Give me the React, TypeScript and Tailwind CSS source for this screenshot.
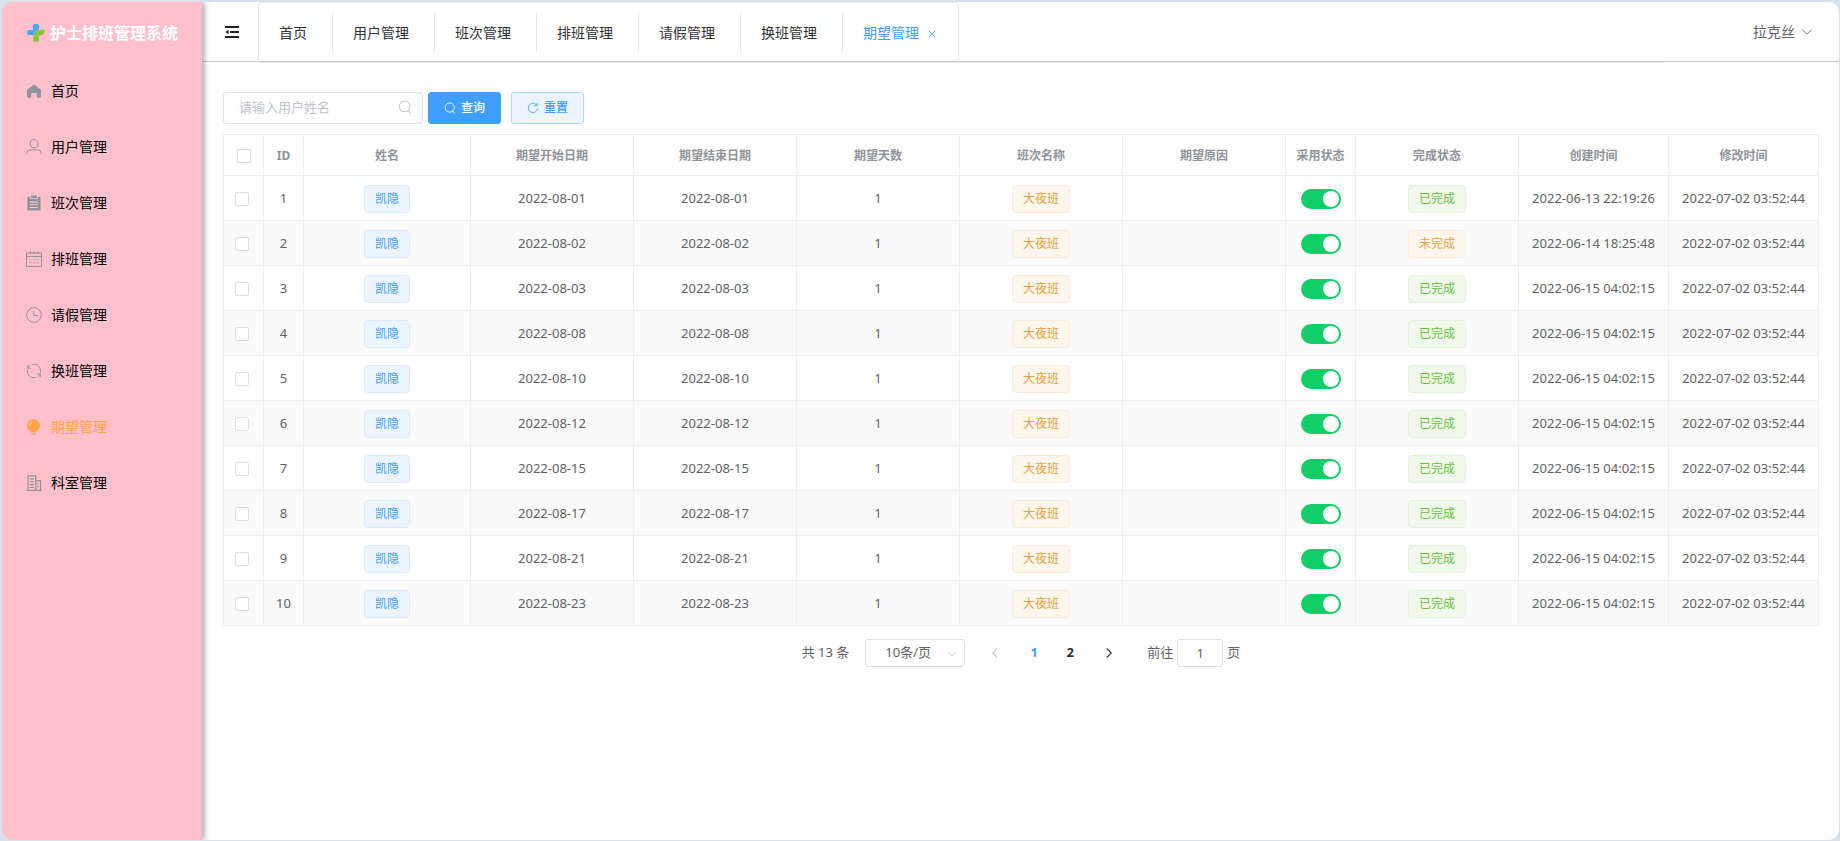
import { useState } from "react";
import type { ReactNode } from "react";

type IconProps = { className?: string };

function Svg({ className, children, width = 64 }: IconProps & { children: ReactNode; width?: number }) {
  return (
    <svg
      viewBox="0 0 1024 1024"
      className={className}
      fill="none"
      stroke="currentColor"
      strokeWidth={width}
      aria-hidden="true"
    >
      {children}
    </svg>
  );
}

const HomeIcon = ({ className }: IconProps) => (
  <Svg className={className}>
    <path
      stroke="none"
      fill="currentColor"
      d="M512 90 L930 420 Q960 446 960 490 V900 Q960 940 920 940 H690 V680 Q690 640 650 640 H374 Q334 640 334 680 V940 H104 Q64 940 64 900 V490 Q64 446 94 420 Z"
    />
  </Svg>
);

const UserIcon = ({ className }: IconProps) => (
  <Svg className={className}>
    <ellipse cx="512" cy="300" rx="245" ry="265" />
    <path d="M64 992 V900 Q64 700 264 700 H760 Q960 700 960 900 V992" />
  </Svg>
);

const OrderIcon = ({ className }: IconProps) => (
  <Svg className={className}>
    <path
      stroke="none"
      fill="currentColor"
      fillRule="evenodd"
      d="M320 30 H704 V200 H320 Z M90 110 H260 V260 H764 V110 H934 V990 H90 Z M260 420 V490 H764 V420 Z M260 590 V660 H764 V590 Z M260 760 V830 H764 V760 Z"
    />
  </Svg>
);

const DateIcon = ({ className }: IconProps) => (
  <Svg className={className}>
    <path d="M32 130 H992 V992 H32 Z M32 350 H992 M270 16 V200 M512 16 V200 M754 16 V200" />
    <path d="M230 560 H330 M462 560 H562 M694 560 H794 M230 760 H330 M462 760 H562 M694 760 H794" />
  </Svg>
);

const TimeIcon = ({ className }: IconProps) => (
  <Svg className={className}>
    <circle cx="512" cy="512" r="470" />
    <path d="M500 240 V544 H750" />
  </Svg>
);

const RefreshIcon = ({ className }: IconProps) => (
  <Svg className={className}>
    <path d="M400 100 Q760 20 900 330 Q950 470 920 600" />
    <path d="M624 924 Q264 1004 124 694 Q74 554 104 424" />
    <path d="M310 330 H110 V130 M110 330 Q160 210 270 150" />
    <path d="M714 694 H914 V894 M914 694 Q864 814 754 874" />
  </Svg>
);

const BulbIcon = ({ className }: IconProps) => (
  <Svg className={className}>
    <path
      stroke="none"
      fill="currentColor"
      d="M480 10 C250 10 70 180 70 410 C70 590 180 700 300 780 L330 870 H632 L662 780 C782 700 892 590 892 410 C892 180 712 10 480 10 Z M340 920 H622 V965 Q622 1010 580 1010 H384 Q340 1010 340 965 Z"
    />
    <path stroke="#ffd9a8" d="M230 400 Q240 220 400 160" />
  </Svg>
);

const OfficeIcon = ({ className }: IconProps) => (
  <Svg className={className} width={76}>
    <path d="M10 980 H1014 M130 980 V60 H620 V980 M620 380 H930 V980" />
    <path d="M240 250 H510 M240 430 H510 M240 610 H510 M240 790 H510 M700 560 H830 M700 740 H830" />
  </Svg>
);

const FoldIcon = ({ className }: IconProps) => (
  <svg viewBox="0 0 14 12" className={className} fill="currentColor" aria-hidden="true">
    <path d="M0 0h14v2H0zM5 5h9v2H5zM0 10h14v2H0zM0.500 6l3-2.300v4.600z" />
  </svg>
);

const SearchIcon = ({ className }: IconProps) => (
  <Svg className={className} width={76}>
    <circle cx="490" cy="470" r="390" />
    <path d="M740 770 L900 960" />
  </Svg>
);

const ResetIcon = ({ className }: IconProps) => (
  <Svg className={className} width={72}>
    <path d="M850 300 A400 400 0 1 0 905 560" />
    <path d="M860 70 V310 H610" />
  </Svg>
);

const Chevron = ({ className }: IconProps) => (
  <Svg className={className} width={72}>
    <path d="M120 320 L512 700 L904 320" />
  </Svg>
);

const Logo = ({ className }: IconProps) => (
  <svg viewBox="0 0 18 18" className={className} aria-hidden="true">
    <path
      fill="#45aaf2"
      d="M6 2Q6 0 8 0H10Q12 0 12 2V6Q8 6.500 7 11H2Q0 11 0 9V8Q0 6 2 6H6Z"
    />
    <path
      fill="#8bc53f"
      d="M6 16Q6 8 11 6.500Q14 5.500 18 6Q18 11 12 12V16Q12 18 10 18H8Q6 18 6 16Z"
    />
  </svg>
);

const menu = [
  { label: "首页", Icon: HomeIcon },
  { label: "用户管理", Icon: UserIcon },
  { label: "班次管理", Icon: OrderIcon },
  { label: "排班管理", Icon: DateIcon },
  { label: "请假管理", Icon: TimeIcon },
  { label: "换班管理", Icon: RefreshIcon },
  { label: "期望管理", Icon: BulbIcon },
  { label: "科室管理", Icon: OfficeIcon },
];

const activePage = "期望管理";
const tabs = menu.slice(0, 7).map((item) => item.label);

const columns = [
  { title: "ID", width: "w-10" },
  { title: "姓名", width: "w-[167px]" },
  { title: "期望开始日期", width: "" },
  { title: "期望结束日期", width: "" },
  { title: "期望天数", width: "" },
  { title: "班次名称", width: "" },
  { title: "期望原因", width: "" },
  { title: "采用状态", width: "w-[70px]" },
  { title: "完成状态", width: "" },
  { title: "创建时间", width: "w-[150px]" },
  { title: "修改时间", width: "w-[150px]" },
];

const days = ["01", "02", "03", "08", "10", "12", "15", "17", "21", "23"];
const rows = days.map((day, i) => ({
  id: i + 1,
  date: `2022-08-${day}`,
  done: i !== 1,
  created: i === 0 ? "2022-06-13 22:19:26" : i === 1 ? "2022-06-14 18:25:48" : "2022-06-15 04:02:15",
  updated: "2022-07-02 03:52:44",
}));

const tagStyles = {
  primary: "border-[#d9ecff] bg-[#ecf5ff] text-[#409eff]",
  warning: "border-[#faecd8] bg-[#fdf6ec] text-[#e6a23c]",
  success: "border-[#e1f3d8] bg-[#f0f9eb] text-[#67c23a]",
};

function Tag({ kind, children }: { kind: keyof typeof tagStyles; children: ReactNode }) {
  return (
    <span
      className={`inline-flex h-7 items-center rounded border px-2.5 align-middle text-xs ${tagStyles[kind]}`}
    >
      {children}
    </span>
  );
}

function CheckBox({ label }: { label: string }) {
  return (
    <input
      type="checkbox"
      aria-label={label}
      className="block size-3.5 appearance-none rounded-[2px] border border-[#dcdfe6] bg-white checked:border-[#409eff] checked:bg-[#409eff]"
    />
  );
}

function Switch({ label }: { label: string }) {
  return (
    <input
      type="checkbox"
      role="switch"
      defaultChecked
      aria-label={label}
      className="mx-auto flex h-5 w-10 cursor-pointer appearance-none items-center rounded-full bg-[#dcdfe6] px-0.5 before:size-4 before:rounded-full before:bg-white before:content-[''] checked:justify-end checked:bg-[#13ce66]"
    />
  );
}

function Sidebar() {
  return (
    <aside className="z-10 w-[200px] shrink-0 bg-[#ffc0cb] shadow-[2px_0_6px_rgba(0,21,41,0.4)]">
      <div className="flex h-[61px] items-center gap-[5px] pl-[25px] text-base font-bold text-white">
        <Logo className="size-[18px]" />
        <h1 className="whitespace-nowrap">护士排班管理系统</h1>
      </div>
      <nav>
        {menu.map(({ label, Icon }) => (
          <a
            key={label}
            href="#"
            className={`flex h-14 items-center gap-2 pl-6 text-sm ${
              label === activePage ? "text-[#ffa445]" : "text-black"
            }`}
          >
            <Icon className={`size-4 ${label === activePage ? "" : "text-[#909399]"}`} />
            <span className="pl-px">{label}</span>
          </a>
        ))}
      </nav>
    </aside>
  );
}

function Header() {
  return (
    <header className="flex h-[60px] shrink-0 items-stretch border-b border-[#c9c9cc]">
      <button type="button" aria-label="折叠菜单" className="w-14 shrink-0 pl-[23px] text-[#1f1f1f]">
        <FoldIcon className="h-3 w-3.5" />
      </button>
      <div className="-mb-0.5 mr-[89px] flex min-w-0 grow items-stretch border-b border-[#e4e7ed]">
        <div className="flex items-center rounded-t border border-b-0 border-[#e4e7ed]">
          {tabs.map((tab, i) => (
            <div
              key={tab}
              className={`flex h-10 items-center pl-5 text-sm ${
                i === 0 ? "" : "border-l border-[#e4e7ed]"
              } ${tab === activePage ? "pr-5 text-[#409eff]" : "pr-[25px] text-[#303133]"}`}
            >
              <a href="#" className="whitespace-nowrap">
                {tab}
              </a>
              {tab === activePage && (
                <button type="button" aria-label="关闭标签" className="ml-2 pt-0.5 pr-px">
                  <svg viewBox="0 0 10 10" className="size-2.5" stroke="currentColor" aria-hidden="true">
                    <path d="M1.500 1.500 8.500 8.500M8.500 1.500 1.500 8.500" strokeWidth="0.8" />
                  </svg>
                </button>
              )}
            </div>
          ))}
        </div>
      </div>
      <button type="button" className="mr-[26px] flex shrink-0 items-center gap-1.5 text-sm text-[#606266]">
        拉克丝
        <Chevron className="size-3" />
      </button>
    </header>
  );
}

function SearchBar() {
  return (
    <form className="flex items-center" onSubmit={(event) => event.preventDefault()}>
      <div className="relative">
        <input
          type="text"
          aria-label="用户姓名"
          placeholder="请输入用户姓名"
          className="block h-8 w-[200px] rounded border border-[#dcdfe6] bg-white pr-8 pb-0.5 pl-[15px] text-[13px] text-[#606266] outline-none placeholder:text-[#c0c4cc] focus:border-[#409eff]"
        />
        <SearchIcon className="absolute top-2 right-[11px] size-3.5 text-[#c0c4cc]" />
      </div>
      <button
        type="submit"
        className="ml-[5px] flex h-8 items-center gap-1 rounded-[3px] border border-[#409eff] bg-[#409eff] px-[15px] text-xs font-medium text-white"
      >
        <SearchIcon className="size-3" />
        <span className="pl-px">查询</span>
      </button>
      <button
        type="reset"
        className="ml-2.5 flex h-8 items-center gap-1 rounded-[3px] border border-[#b3d8ff] bg-[#ecf5ff] px-[15px] text-xs font-medium text-[#409eff]"
      >
        <ResetIcon className="size-3" />
        <span className="pl-px">重置</span>
      </button>
    </form>
  );
}

const cell = "border-r border-b border-[#ebeef5] pt-0.5";

function ExpectationTable() {
  return (
    <table className="mt-2.5 w-full table-fixed border-separate border-spacing-0 border-t border-l border-[#ebeef5] text-center text-[13px] text-[#606266]">
      <thead className="text-xs text-[#909399]">
        <tr className="h-[41px]">
          <th className={`${cell} w-10 pl-[13px]`}>
            <CheckBox label="全选" />
          </th>
          {columns.map((column) => (
            <th key={column.title} scope="col" className={`${cell} ${column.width} font-bold whitespace-nowrap`}>
              {column.title}
            </th>
          ))}
        </tr>
      </thead>
      <tbody>
        {rows.map((row) => (
          <tr key={row.id} className="h-[45px] even:bg-[#fafafa]">
            <td className={`${cell} pl-[11px]`}>
              <CheckBox label={`选择第 ${row.id} 行`} />
            </td>
            <td className={cell}>{row.id}</td>
            <td className={cell}>
              <Tag kind="primary">凯隐</Tag>
            </td>
            <td className={cell}>{row.date}</td>
            <td className={cell}>{row.date}</td>
            <td className={cell}>1</td>
            <td className={cell}>
              <Tag kind="warning">大夜班</Tag>
            </td>
            <td className={cell} />
            <td className={cell}>
              <Switch label={`第 ${row.id} 行采用状态`} />
            </td>
            <td className={cell}>
              <Tag kind={row.done ? "success" : "warning"}>{row.done ? "已完成" : "未完成"}</Tag>
            </td>
            <td className={`${cell} whitespace-nowrap`}>{row.created}</td>
            <td className={`${cell} whitespace-nowrap`}>{row.updated}</td>
          </tr>
        ))}
      </tbody>
    </table>
  );
}

function Pagination() {
  const [page, setPage] = useState(1);
  return (
    <div className="mt-[13px] flex h-7 items-center justify-center text-[13px] text-[#606266]">
      <span className="mr-4">共 13 条</span>
      <div className="relative">
        <select
          aria-label="每页条数"
          className="h-7 w-[100px] appearance-none rounded-[3px] border border-[#dcdfe6] bg-white pl-[19px] text-[13px] text-[#606266]"
        >
          <option>10条/页</option>
          <option>20条/页</option>
        </select>
        <Chevron className="pointer-events-none absolute top-2.5 right-2 size-2.5 text-[#c0c4cc]" />
      </div>
      <button
        type="button"
        aria-label="上一页"
        disabled={page === 1}
        onClick={() => setPage(1)}
        className="ml-6 flex size-3 items-center justify-center text-[#303133] disabled:text-[#c0c4cc]"
      >
        <Chevron className="size-3 rotate-90 stroke-100" />
      </button>
      <div className="mx-[15px] flex">
        {[1, 2].map((n) => (
          <button
            key={n}
            type="button"
            onClick={() => setPage(n)}
            className={`h-7 w-9 font-bold ${page === n ? "text-[#409eff]" : "text-[#303133]"}`}
          >
            {n}
          </button>
        ))}
      </div>
      <button
        type="button"
        aria-label="下一页"
        onClick={() => setPage(2)}
        className="mr-8 flex size-3 items-center justify-center text-[#303133]"
      >
        <Chevron className="size-3 -rotate-90 stroke-100" />
      </button>
      <label className="flex items-center gap-1">
        前往
        <input
          type="text"
          defaultValue="1"
          className="h-7 w-[46px] rounded-[3px] border border-[#dcdfe6] bg-white text-center text-[13px] text-[#606266]"
        />
        页
      </label>
    </div>
  );
}

export default function App() {
  return (
    <div className="flex min-h-screen bg-[#d9e2ea] pt-0.5 pr-px pb-px pl-0.5 font-['Noto_Sans','Noto_Sans_CJK_SC',sans-serif]">
      <div className="flex min-w-0 grow overflow-hidden rounded-[10px] bg-white">
        <Sidebar />
        <div className="flex min-w-0 grow flex-col">
          <Header />
          <main className="pt-[30px] pr-5 pl-[21px]">
            <SearchBar />
            <ExpectationTable />
            <Pagination />
          </main>
        </div>
      </div>
    </div>
  );
}
